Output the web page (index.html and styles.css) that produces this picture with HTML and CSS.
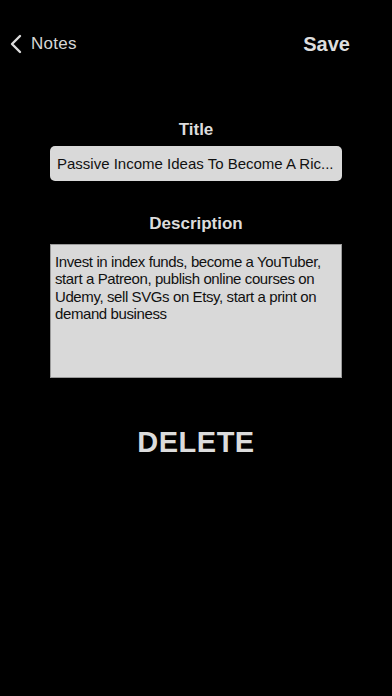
FILE: index.html
```html
<!DOCTYPE html>
<html>
<head>
<meta charset="utf-8">
<link rel="stylesheet" href="styles.css">
</head>
<body>
<div class="screen">
  <header class="nav">
    <div class="back">
      <svg class="chev" width="12" height="20" viewBox="0 0 12 20"><path d="M10 2 L2 10 L10 18" fill="none" stroke="#dcdcdc" stroke-width="2.4" stroke-linecap="round" stroke-linejoin="round"/></svg>
      <span class="back-label">Notes</span>
    </div>
    <span class="save">Save</span>
  </header>
  <main class="form">
    <div class="label">Title</div>
    <div class="title-input">Passive Income Ideas To Become A Ric...</div>
    <div class="label desc-label">Description</div>
    <div class="desc-input">Invest in index funds, become a YouTuber, start a Patreon, publish online courses on Udemy, sell SVGs on Etsy, start a print on demand business</div>
    <div class="delete">DELETE</div>
  </main>
</div>
</body>
</html>
```
FILE: styles.css
```css
html, body {
  margin: 0;
  padding: 0;
  background: #000;
}
body {
  font-family: "Liberation Sans", Arial, sans-serif;
  color: #dcdcdc;
  width: 392px;
  height: 696px;
  overflow: hidden;
}
.screen {
  display: flex;
  flex-direction: column;
}
.nav {
  height: 44px;
  margin-top: 22px;
  display: flex;
  align-items: center;
  justify-content: space-between;
  padding: 0 42px 0 10px;
}
.back {
  display: flex;
  align-items: center;
  gap: 9px;
}
.chev { display: block; }
.back-label {
  font-size: 17px;
  letter-spacing: 0.3px;
  color: #d6d6d6;
}
.save {
  font-size: 20px;
  font-weight: bold;
  color: #dedede;
}
.form {
  display: flex;
  flex-direction: column;
  align-items: center;
  padding-top: 54px;
}
.label {
  font-size: 17px;
  font-weight: bold;
  color: #dcdcdc;
  line-height: 20px;
  margin-bottom: 6px;
}
.title-input {
  width: 292px;
  height: 35px;
  box-sizing: border-box;
  background: #d9d9d9;
  border-radius: 5px;
  color: #111;
  font-size: 15px;
  line-height: 35px;
  padding: 0 7px;
  white-space: nowrap;
  overflow: hidden;
}
.desc-label {
  margin-top: 33px;
  margin-bottom: 10px;
}
.desc-input {
  width: 292px;
  height: 134px;
  box-sizing: border-box;
  background: #d9d9d9;
  border: 1px solid #9a9a9a;
  color: #111;
  font-size: 15px;
  letter-spacing: -0.4px;
  line-height: 17.4px;
  padding: 8px 4px;
}
.delete {
  margin-top: 48px;
  font-size: 29px;
  font-weight: bold;
  color: #dcdcdc;
  letter-spacing: 0.5px;
}
```
